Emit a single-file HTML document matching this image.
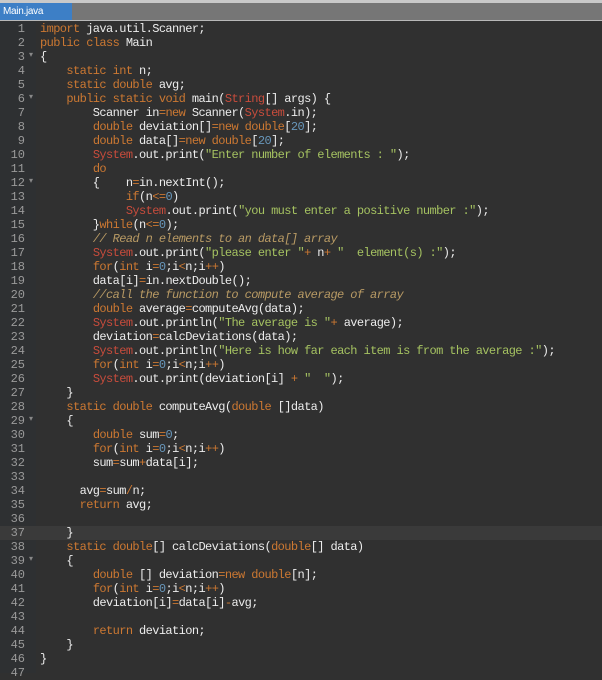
<!DOCTYPE html>
<html><head><meta charset="utf-8"><style>
html,body{margin:0;padding:0;width:602px;height:673px;overflow:hidden;background:#303030;}
.top{position:absolute;left:0;top:0;width:602px;height:3px;background:#c9c9c9;}
.bar{position:absolute;left:0;top:3px;width:602px;height:17px;background:#767676;border-bottom:1px solid #b8b8b8;}
.tab{position:absolute;left:0;top:3px;width:72px;height:17px;background:#3d7fc6;color:#fff;font:10px "Liberation Sans",sans-serif;line-height:17px;padding-left:3px;box-sizing:border-box;letter-spacing:-0.3px;}
.gut{position:absolute;left:0;top:21px;width:36px;height:652px;background:#2e3032;}
.code{position:absolute;left:0;top:22px;width:602px;}
.l{position:relative;height:14px;line-height:14px;font:12px "Liberation Mono",monospace;letter-spacing:-0.6px;white-space:pre;color:#ececec;}
.l.hl{background:#3a3a3a;}
.ln{position:absolute;left:0;width:25px;text-align:right;color:#9a9a9a;letter-spacing:0;}
.f{position:absolute;left:29px;color:#888;font-size:8px;}
.t{position:absolute;left:40px;}
.k{color:#cc7832}.s{color:#a5c261}.c{color:#b89a64;font-style:italic}.n{color:#6897bb}.r{color:#c84c3c}.o{color:#cc7832}
</style></head><body>
<div class="top"></div><div class="bar"></div><div class="tab">Main.java</div>
<div class="gut"></div>
<div class="code">
<div class="l"><span class="ln">1</span><span class="t"><span class="k">import</span> java.util.Scanner;</span></div>
<div class="l"><span class="ln">2</span><span class="t"><span class="k">public</span> <span class="k">class</span> Main</span></div>
<div class="l"><span class="ln">3</span><span class="f">▾</span><span class="t">{</span></div>
<div class="l"><span class="ln">4</span><span class="t">    <span class="k">static</span> <span class="k">int</span> n;</span></div>
<div class="l"><span class="ln">5</span><span class="t">    <span class="k">static</span> <span class="k">double</span> avg;</span></div>
<div class="l"><span class="ln">6</span><span class="f">▾</span><span class="t">    <span class="k">public</span> <span class="k">static</span> <span class="k">void</span> main(<span class="r">String</span>[] args) {</span></div>
<div class="l"><span class="ln">7</span><span class="t">        Scanner in<span class="o">=</span><span class="k">new</span> Scanner(<span class="r">System</span>.in);</span></div>
<div class="l"><span class="ln">8</span><span class="t">        <span class="k">double</span> deviation[]<span class="o">=</span><span class="k">new</span> <span class="k">double</span>[<span class="n">20</span>];</span></div>
<div class="l"><span class="ln">9</span><span class="t">        <span class="k">double</span> data[]<span class="o">=</span><span class="k">new</span> <span class="k">double</span>[<span class="n">20</span>];</span></div>
<div class="l"><span class="ln">10</span><span class="t">        <span class="r">System</span>.out.print(<span class="s">"Enter number of elements : "</span>);</span></div>
<div class="l"><span class="ln">11</span><span class="t">        <span class="k">do</span></span></div>
<div class="l"><span class="ln">12</span><span class="f">▾</span><span class="t">        {    n<span class="o">=</span>in.nextInt();</span></div>
<div class="l"><span class="ln">13</span><span class="t">             <span class="k">if</span>(n<span class="o">&lt;=</span><span class="n">0</span>)</span></div>
<div class="l"><span class="ln">14</span><span class="t">             <span class="r">System</span>.out.print(<span class="s">"you must enter a positive number :"</span>);</span></div>
<div class="l"><span class="ln">15</span><span class="t">        }<span class="k">while</span>(n<span class="o">&lt;=</span><span class="n">0</span>);</span></div>
<div class="l"><span class="ln">16</span><span class="t">        <span class="c">// Read n elements to an data[] array</span></span></div>
<div class="l"><span class="ln">17</span><span class="t">        <span class="r">System</span>.out.print(<span class="s">"please enter "</span><span class="o">+</span> n<span class="o">+</span> <span class="s">"  element(s) :"</span>);</span></div>
<div class="l"><span class="ln">18</span><span class="t">        <span class="k">for</span>(<span class="k">int</span> i<span class="o">=</span><span class="n">0</span>;i<span class="o">&lt;</span>n;i<span class="o">++</span>)</span></div>
<div class="l"><span class="ln">19</span><span class="t">        data[i]<span class="o">=</span>in.nextDouble();</span></div>
<div class="l"><span class="ln">20</span><span class="t">        <span class="c">//call the function to compute average of array</span></span></div>
<div class="l"><span class="ln">21</span><span class="t">        <span class="k">double</span> average<span class="o">=</span>computeAvg(data);</span></div>
<div class="l"><span class="ln">22</span><span class="t">        <span class="r">System</span>.out.println(<span class="s">"The average is "</span><span class="o">+</span> average);</span></div>
<div class="l"><span class="ln">23</span><span class="t">        deviation<span class="o">=</span>calcDeviations(data);</span></div>
<div class="l"><span class="ln">24</span><span class="t">        <span class="r">System</span>.out.println(<span class="s">"Here is how far each item is from the average :"</span>);</span></div>
<div class="l"><span class="ln">25</span><span class="t">        <span class="k">for</span>(<span class="k">int</span> i<span class="o">=</span><span class="n">0</span>;i<span class="o">&lt;</span>n;i<span class="o">++</span>)</span></div>
<div class="l"><span class="ln">26</span><span class="t">        <span class="r">System</span>.out.print(deviation[i] <span class="o">+</span> <span class="s">"  "</span>);</span></div>
<div class="l"><span class="ln">27</span><span class="t">    }</span></div>
<div class="l"><span class="ln">28</span><span class="t">    <span class="k">static</span> <span class="k">double</span> computeAvg(<span class="k">double</span> []data)</span></div>
<div class="l"><span class="ln">29</span><span class="f">▾</span><span class="t">    {</span></div>
<div class="l"><span class="ln">30</span><span class="t">        <span class="k">double</span> sum<span class="o">=</span><span class="n">0</span>;</span></div>
<div class="l"><span class="ln">31</span><span class="t">        <span class="k">for</span>(<span class="k">int</span> i<span class="o">=</span><span class="n">0</span>;i<span class="o">&lt;</span>n;i<span class="o">++</span>)</span></div>
<div class="l"><span class="ln">32</span><span class="t">        sum<span class="o">=</span>sum<span class="o">+</span>data[i];</span></div>
<div class="l"><span class="ln">33</span><span class="t"></span></div>
<div class="l"><span class="ln">34</span><span class="t">      avg<span class="o">=</span>sum<span class="o">/</span>n;</span></div>
<div class="l"><span class="ln">35</span><span class="t">      <span class="k">return</span> avg;</span></div>
<div class="l"><span class="ln">36</span><span class="t"></span></div>
<div class="l hl"><span class="ln">37</span><span class="t">    }</span></div>
<div class="l"><span class="ln">38</span><span class="t">    <span class="k">static</span> <span class="k">double</span>[] calcDeviations(<span class="k">double</span>[] data)</span></div>
<div class="l"><span class="ln">39</span><span class="f">▾</span><span class="t">    {</span></div>
<div class="l"><span class="ln">40</span><span class="t">        <span class="k">double</span> [] deviation<span class="o">=</span><span class="k">new</span> <span class="k">double</span>[n];</span></div>
<div class="l"><span class="ln">41</span><span class="t">        <span class="k">for</span>(<span class="k">int</span> i<span class="o">=</span><span class="n">0</span>;i<span class="o">&lt;</span>n;i<span class="o">++</span>)</span></div>
<div class="l"><span class="ln">42</span><span class="t">        deviation[i]<span class="o">=</span>data[i]<span class="o">-</span>avg;</span></div>
<div class="l"><span class="ln">43</span><span class="t"></span></div>
<div class="l"><span class="ln">44</span><span class="t">        <span class="k">return</span> deviation;</span></div>
<div class="l"><span class="ln">45</span><span class="t">    }</span></div>
<div class="l"><span class="ln">46</span><span class="t">}</span></div>
<div class="l"><span class="ln">47</span><span class="t"></span></div>
</div>
</body></html>
